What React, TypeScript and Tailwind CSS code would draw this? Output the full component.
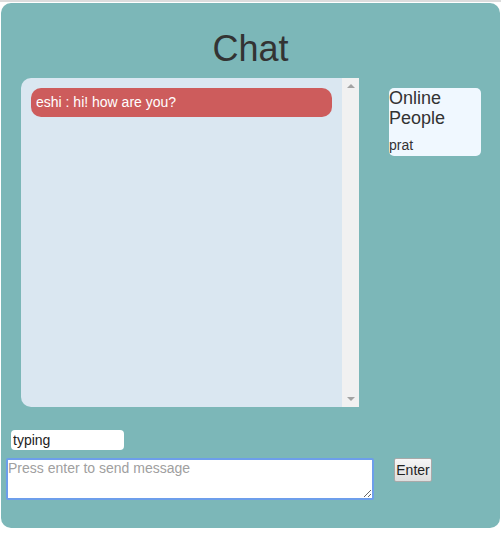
import React, { useState } from 'react';

export default function App() {
  const [msg, setMsg] = useState('');
  const [typing, setTyping] = useState('typing');

  return (
    <div className="w-[501px] h-[533px] bg-white font-['Liberation_Sans',Arial,sans-serif]">
      <div className="h-[2px] bg-[#dcdcdc]" />
      <div className="ml-[1px] mt-[1px] w-[499px] h-[525px] rounded-[10px] bg-[#7cb7b8] pt-[25px] text-[#333]">
        <h1 className="text-center text-[36px] leading-[41px]">Chat</h1>

        <div className="mt-[9px] flex items-start">
          {/* messages */}
          <div className="ml-[20px] flex h-[329px] w-[338px] overflow-hidden rounded-l-[10px] bg-[#dae7f1]">
            <div className="flex-1 pl-[10px] pr-[10px] pt-[10px]">
              <div className="h-[29px] rounded-[10px] bg-[#cd5c5c] pl-[5px] text-[14px] leading-[29px] text-white">
                eshi : hi! how are you?
              </div>
            </div>
            <div className="flex w-[17px] flex-col items-center justify-between bg-[#f1f1f1] py-[6px]">
              <div className="h-0 w-0 border-x-[4px] border-b-[4px] border-x-transparent border-b-[#a3a3a3]" />
              <div className="h-0 w-0 border-x-[4px] border-t-[4px] border-x-transparent border-t-[#a3a3a3]" />
            </div>
          </div>

          {/* online people */}
          <div className="ml-[30px] mt-[10px] h-[68px] w-[92px] rounded-[5px] bg-[#f0f8ff]">
            <div className="text-[18px] leading-[20px]">Online People</div>
            <div className="mt-[9px] text-[14px] leading-[16px]">prat</div>
          </div>
        </div>

        <input
          value={typing}
          onChange={(e) => setTyping(e.target.value)}
          className="ml-[10px] mt-[23px] block h-[20px] w-[113px] rounded-[4px] bg-white px-[2px] text-[14px] leading-[20px] text-[#222] outline-none"
        />

        <div className="mt-[8px] ml-[5px] flex items-start">
          <textarea
            value={msg}
            onChange={(e) => setMsg(e.target.value)}
            placeholder="Press enter to send message"
            className="block h-[42px] w-[368px] rounded-[2px] border-2 border-[#6d9eeb] bg-white px-[0px] text-[14px] leading-[16px] text-[#222] outline-none placeholder:text-[#a0a0a0]"
          />
          <button className="ml-[20px] h-[24px] w-[38px] rounded-[2px] border border-[#a9a9a9] bg-gradient-to-b from-[#f6f6f6] to-[#dedede] text-[14px] text-[#222]">
            Enter
          </button>
        </div>
      </div>
    </div>
  );
}
